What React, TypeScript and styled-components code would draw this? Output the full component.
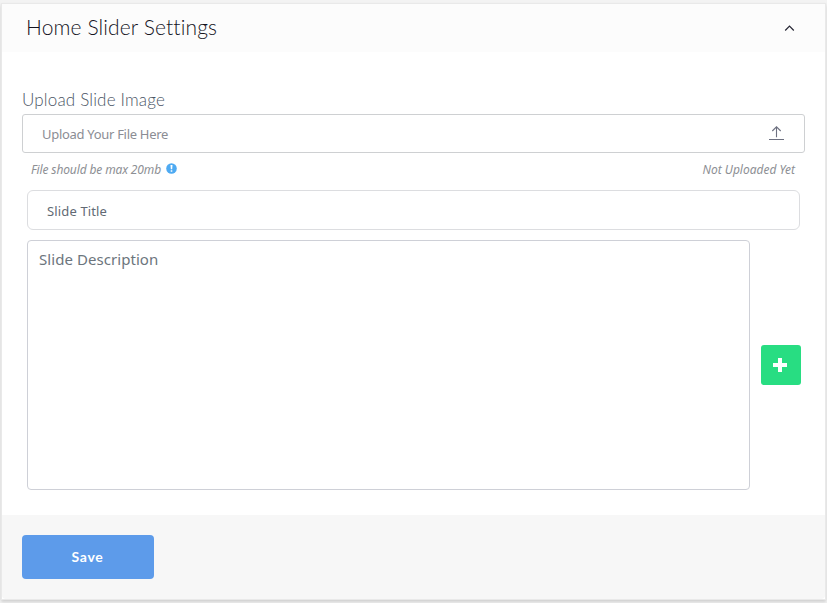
import React from "react";
import styled, { createGlobalStyle } from "styled-components";

const GlobalStyle = createGlobalStyle`
  *, *::before, *::after { box-sizing: border-box; }
  body { margin: 0; background: #f3f3f3; font-family: "Noto Sans", "Open Sans", sans-serif; overflow: hidden; }
`;

const Page = styled.main`
  height: 603px;
  padding: 4px 2px;
`;

const Card = styled.section`
  display: flex;
  flex-direction: column;
  width: 823px;
  height: 595px;
  background: #fff;
  box-shadow: 0 0 0 1px #e9e9e9, 0 2px 3px 1px #d0d0d0;
`;

const Header = styled.header`
  display: flex;
  align-items: center;
  justify-content: space-between;
  height: 48px;
  padding: 0 30px 0 24px;
  background: #fcfcfc;
`;

const Title = styled.h2`
  margin: 0;
  padding-bottom: 2px;
  font: 300 21px/24px Lato, sans-serif;
  letter-spacing: 0.12px;
  color: #14141e;
  white-space: nowrap;
`;

const Body = styled.div`
  display: flex;
  flex-direction: column;
  height: 463px;
  padding: 38px 20px 0;
`;

const Label = styled.label`
  height: 24px;
  font: 300 17px/20px Lato, sans-serif;
  letter-spacing: 0.17px;
  color: #4b5565;
  white-space: nowrap;
`;

const UploadBox = styled.div`
  display: flex;
  align-items: center;
  justify-content: space-between;
  width: 783px;
  height: 39px;
  padding: 0 20px 0 19px;
  border: 1px solid #ced0d2;
  border-radius: 3px;
  font-size: 13px;
  letter-spacing: -0.3px;
  color: #8b8d94;
`;

const Hints = styled.div`
  display: flex;
  justify-content: space-between;
  height: 37px;
  padding: 8px 10px 0 9px;
  font-size: 12px;
  line-height: 18px;
  font-style: italic;
  color: #8d8f94;
`;

const SizeHint = styled.span`
  display: flex;
  gap: 5px;
  letter-spacing: -0.13px;
  svg { margin-top: 2px; }
`;

const TitleInput = styled.input`
  width: 773px;
  height: 40px;
  margin-left: 5px;
  padding: 2px 19px 0;
  border: 1px solid #dcdde0;
  border-radius: 6px;
  outline: none;
  font: 13px "Noto Sans", sans-serif;
  letter-spacing: 0.14px;
  color: #626a74;
  &::placeholder { color: #626a74; opacity: 1; }
`;

const DescriptionRow = styled.div`
  display: flex;
  align-items: center;
  gap: 11px;
  margin: 10px 0 0 5px;
`;

const Description = styled.textarea`
  display: block;
  width: 723px;
  height: 250px;
  padding: 6px 11px;
  border: 1px solid #ced0d7;
  border-radius: 4px;
  outline: none;
  resize: none;
  font: 15px/24px "Noto Sans", sans-serif;
  letter-spacing: 0.06px;
  color: #6c757d;
  &::placeholder { color: #6c757d; opacity: 1; }
`;

const AddButton = styled.button`
  display: grid;
  place-items: center;
  width: 40px;
  height: 40px;
  padding: 0 2px 0 0;
  border: 0;
  border-radius: 3px;
  background: #28dd82;
`;

const Footer = styled.footer`
  height: 84px;
  padding: 20px;
  background: #f7f7f7;
  border-radius: 0 0 4px 4px;
`;

const SaveButton = styled.button`
  width: 132px;
  height: 44px;
  padding: 0 1px 2px 0;
  border: 0;
  border-radius: 4px;
  background: #5d9bea;
  color: #fff;
  font: 700 14px Lato, sans-serif;
  letter-spacing: 0.7px;
`;

export default function App() {
  return (
    <>
      <GlobalStyle />
      <Page>
        <Card>
          <Header>
            <Title>Home Slider Settings</Title>
            <svg width="11" height="8" viewBox="0 0 11 8" fill="none" stroke="#252533" strokeWidth="1.2">
              <path d="M1.2 6.5 5.5 2.2l4.3 4.3" />
            </svg>
          </Header>
          <Body>
            <Label>Upload Slide Image</Label>
            <UploadBox>
              <span>Upload Your File Here</span>
              <svg width="15" height="16" viewBox="0 0 15 16" fill="none" stroke="#6d7080" strokeWidth="1.1">
                <path d="M7.5 11.2V.8M3.3 5l4.2-4.2L11.7 5M0 13.5h15" />
              </svg>
            </UploadBox>
            <Hints>
              <SizeHint>
                <span>File should be max 20mb</span>
                <svg width="11" height="11" viewBox="0 0 11 11">
                  <circle cx="5.5" cy="5.5" r="5.3" fill="#4eaaf2" />
                  <path d="M4.5 2h2l-.3 4.3H4.8zM4.7 7.2h1.6v1.6H4.7z" fill="#fff" />
                </svg>
              </SizeHint>
              <span>Not Uploaded Yet</span>
            </Hints>
            <TitleInput placeholder="Slide Title" />
            <DescriptionRow>
              <Description placeholder="Slide Description" />
              <AddButton aria-label="Add slide">
                <svg width="16" height="16" viewBox="0 0 16 16">
                  <path d="M6 1h4v5h5v4h-5v5H6v-5H1V6h5z" fill="#fff" />
                </svg>
              </AddButton>
            </DescriptionRow>
          </Body>
          <Footer>
            <SaveButton>Save</SaveButton>
          </Footer>
        </Card>
      </Page>
    </>
  );
}
